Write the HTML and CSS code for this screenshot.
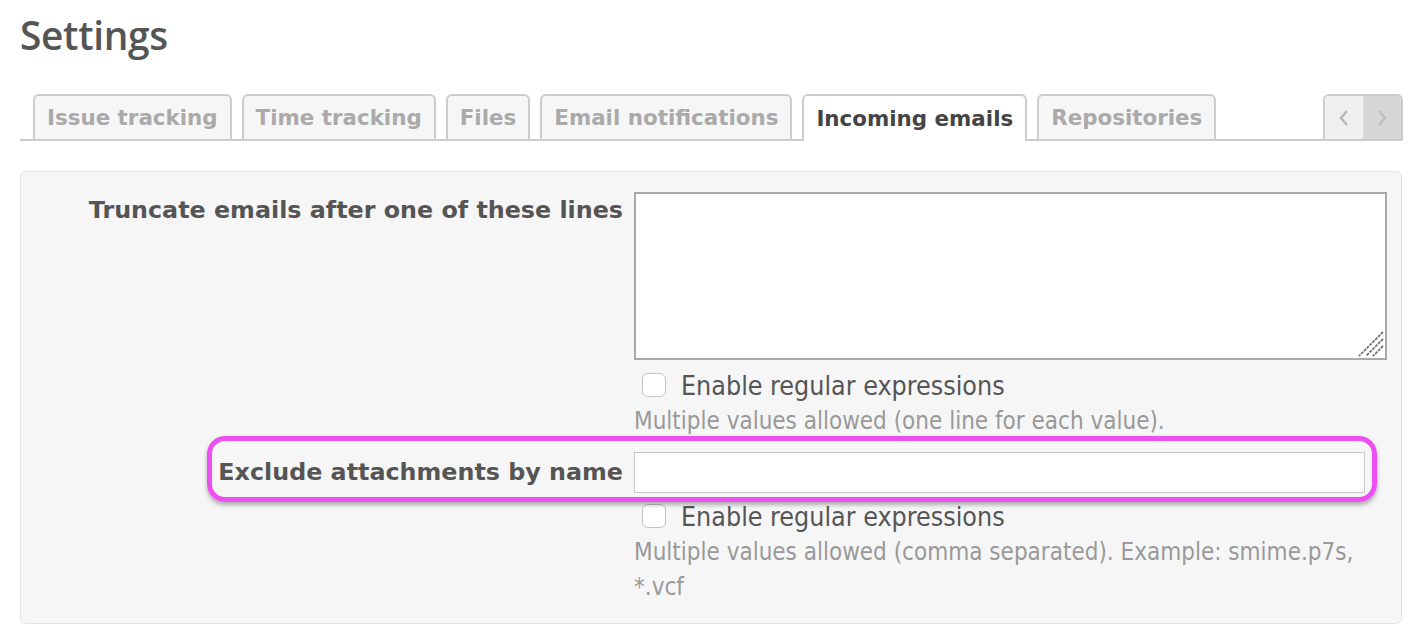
FILE: index.html
```html
<!DOCTYPE html>
<html>
<head>
<meta charset="utf-8">
<link rel="stylesheet" href="styles.css">
</head>
<body>
<div class="page">
  <h2 class="title">Settings</h2>
  <div class="tabs">
    <ul class="tab-list">
      <li class="tab">Issue tracking</li>
      <li class="tab">Time tracking</li>
      <li class="tab">Files</li>
      <li class="tab">Email notifications</li>
      <li class="tab tab-selected">Incoming emails</li>
      <li class="tab">Repositories</li>
    </ul>
    <div class="tab-buttons">
      <span class="tab-btn tab-btn-left"><svg width="14" height="18" viewBox="0 0 14 18"><path d="M10 2 L4 9 L10 16" fill="none" stroke="#b8b8b8" stroke-width="2.6"/></svg></span>
      <span class="tab-btn tab-btn-right"><svg width="14" height="18" viewBox="0 0 14 18"><path d="M4 2 L10 9 L4 16" fill="none" stroke="#bdbdbd" stroke-width="2.2"/></svg></span>
    </div>
  </div>
  <div class="box">
    <div class="row">
      <label class="label label-first">Truncate emails after one of these lines</label>
      <div class="field">
        <div class="textarea"><svg class="grip" width="26" height="26" viewBox="0 0 26 26"><path d="M25 1 L1 25 M25 8 L8 25 M25 15 L15 25" stroke="#6f6f6f" stroke-width="1.8" stroke-dasharray="3 1"/></svg></div>
        <div class="check"><span class="checkbox"></span>Enable regular expressions</div>
        <div class="help">Multiple values allowed (one line for each value).</div>
      </div>
    </div>
    <div class="row row-second">
      <div class="highlight"></div>
      <label class="label label-second">Exclude attachments by name</label>
      <div class="field">
        <div class="input"></div>
        <div class="check check-second"><span class="checkbox"></span>Enable regular expressions</div>
        <div class="help help-wrap">Multiple values allowed (comma separated). Example: smime.p7s, *.vcf</div>
      </div>
    </div>
  </div>
</div>
</body>
</html>
```
FILE: styles.css
```css
html, body {
  margin: 0;
  padding: 0;
  background: #fff;
}
.page {
  padding: 0 14px 0 20px;
  font-family: "DejaVu Sans", Verdana, sans-serif;
  color: #555;
}
.title {
  margin: 0;
  padding-top: 12px;
  height: 94px;
  box-sizing: border-box;
  font-family: "Open Sans", sans-serif;
  font-weight: 600;
  font-size: 38.8px;
  line-height: 46px;
  color: #555;
  letter-spacing: -0.3px;
}
.tabs {
  display: flex;
  justify-content: space-between;
  align-items: flex-end;
  border-bottom: 2px solid #ccc;
  height: 45px;
}
.tab-list {
  list-style: none;
  margin: 0;
  padding: 0 0 0 13px;
  display: flex;
  gap: 10px;
  align-items: flex-end;
}
.tab {
  height: 45px;
  box-sizing: border-box;
  border: 2px solid #ccc;
  border-bottom: none;
  border-radius: 6px 6px 0 0;
  background: #f6f6f6;
  padding: 0 12px;
  font-weight: bold;
  font-size: 21.4px;
  line-height: 44px;
  color: #aaa;
  white-space: nowrap;
}
.tab-selected {
  background: #fff;
  color: #444;
  height: 47px;
  margin-bottom: -2px;
  line-height: 46px;
}
.tab-buttons {
  display: flex;
  height: 45px;
  border: 2px solid #ccc;
  border-bottom: none;
  border-radius: 6px 6px 0 0;
  overflow: hidden;
  box-sizing: border-box;
  width: 80px;
}
.tab-btn {
  flex: 1;
  display: flex;
  align-items: center;
  justify-content: center;
}
.tab-btn-left {
  background: #f0f0f0;
  border-right: 1px solid #ddd;
}
.tab-btn-right {
  background: #d6d6d6;
}
.box {
  margin-top: 30px;
  width: 1382px;
  box-sizing: border-box;
  background: #f6f6f6;
  border: 1px solid #e4e4e4;
  border-radius: 6px;
  padding: 20px 14px 18px 0;
}
.row {
  display: grid;
  grid-template-columns: 602px 1fr;
  column-gap: 11px;
  position: relative;
}
.label {
  text-align: right;
  font-weight: bold;
  color: #555;
  white-space: nowrap;
  font-size: 23.8px;
}
.label-first {
  line-height: 36px;
}
.label-second {
  line-height: 41px;
  position: relative;
  z-index: 1;
}
.field {
  font-family: "DejaVu Sans Condensed", "DejaVu Sans", sans-serif;
  font-stretch: condensed;
}
.textarea {
  position: relative;
  height: 168px;
  box-sizing: border-box;
  border: 2px solid #a8a8a8;
  background: #fff;
}
.grip {
  position: absolute;
  right: 1px;
  bottom: 1px;
}
.check {
  display: flex;
  align-items: center;
  margin-top: 8px;
  height: 34px;
  font-size: 26.6px;
  color: #555;
}
.check-second {
  margin-top: 6px;
}
.checkbox {
  width: 22px;
  height: 22px;
  border: 1px solid #c4c4c4;
  border-radius: 6px;
  background: #fff;
  margin: 0 15px 0 8px;
  flex: none;
}
.help {
  margin-top: 2px;
  font-size: 24px;
  line-height: 35px;
  color: #999;
}
.help-wrap {
  width: 740px;
}
.row-second {
  margin-top: 13px;
}
.input {
  width: 731px;
  height: 41px;
  box-sizing: border-box;
  border: 1px solid #c8c8c8;
  background: #fff;
  position: relative;
  z-index: 1;
}
.highlight {
  position: absolute;
  left: 186px;
  top: -16px;
  width: 1170px;
  height: 66px;
  box-sizing: border-box;
  border: 5px solid #ec50f0;
  border-radius: 18px;
  box-shadow: 0 3px 4px rgba(0, 0, 0, 0.3);
}
```
